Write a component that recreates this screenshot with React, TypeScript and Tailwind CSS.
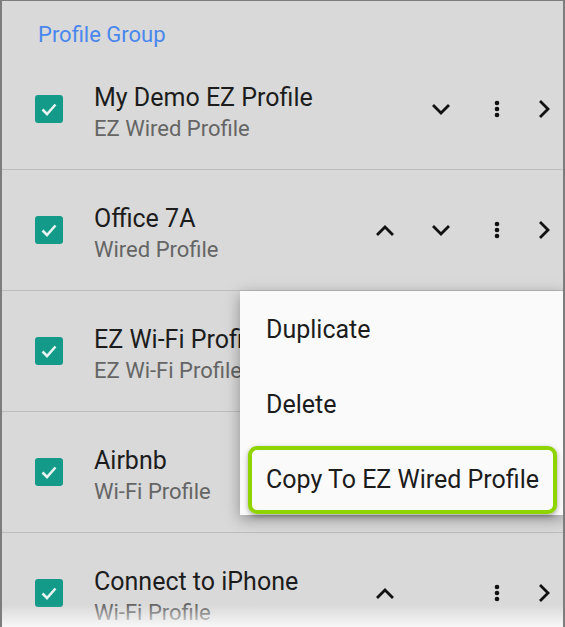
import { ReactNode } from 'react';

type Row = {
    title: string;
    subtitle: string;
    up: boolean;
    down: boolean;
};

const rows: Row[] = [
    { title: 'My Demo EZ Profile', subtitle: 'EZ Wired Profile', up: false, down: true },
    { title: 'Office 7A', subtitle: 'Wired Profile', up: true, down: true },
    { title: 'EZ Wi-Fi Profile', subtitle: 'EZ Wi-Fi Profile', up: true, down: true },
    { title: 'Airbnb', subtitle: 'Wi-Fi Profile', up: true, down: true },
    { title: 'Connect to iPhone', subtitle: 'Wi-Fi Profile', up: true, down: false },
];

function Chevron({ dir }: { dir: 'up' | 'down' | 'right' }) {
    const points = dir === 'up' ? '3,14 10,7 17,14' : dir === 'down' ? '3,7 10,14 17,7' : '7,3 14,10 7,17';
    return (
        <svg width="20" height="20" viewBox="0 0 20 20">
            <polyline points={points} fill="none" stroke="#111" strokeWidth="2.8" strokeLinecap="square" />
        </svg>
    );
}

function Dots() {
    return (
        <svg width="8" height="20" viewBox="0 0 8 20">
            <circle cx="4" cy="4" r="2.3" fill="#111" />
            <circle cx="4" cy="10" r="2.3" fill="#111" />
            <circle cx="4" cy="16" r="2.3" fill="#111" />
        </svg>
    );
}

function Slot({ children, w = 'w-[56px]' }: { children?: ReactNode; w?: string }) {
    return <div className={`${w} flex justify-center items-center`}>{children}</div>;
}

function Checkbox() {
    return (
        <div className="w-[28px] h-[28px] rounded-[3px] bg-[#149a88] flex items-center justify-center shrink-0">
            <svg width="20" height="20" viewBox="0 0 20 20">
                <polyline points="3.5,10.5 8,15 16.5,5.5" fill="none" stroke="#e6f3f1" strokeWidth="2.6" />
            </svg>
        </div>
    );
}

export default function App() {
    return (
        <div className="relative w-[565px] h-[627px] overflow-hidden bg-[#d9d9d9] border-x-2 border-t border-[#7d7d7d] font-['Roboto',sans-serif]">
            <div className="h-[48px] pl-[36px] pt-[22px]">
                <p className="text-[22px] leading-[24px] text-[#4a87ee]">Profile Group</p>
            </div>

            {rows.map((row) => (
                <div key={row.title} className="h-[121px] border-b border-[#bdbdbd] flex items-center pl-[33px]">
                    <Checkbox />
                    <div className="ml-[31px] mt-[6px] flex flex-col whitespace-nowrap">
                        <span className="text-[25px] leading-[30px] text-[#1c1c1c]">{row.title}</span>
                        <span className="text-[22px] leading-[26px] mt-[3px] text-[#656565]">{row.subtitle}</span>
                    </div>
                    <div className="ml-auto flex items-center">
                        <Slot>{row.up && <Chevron dir="up" />}</Slot>
                        <Slot>{row.down && <Chevron dir="down" />}</Slot>
                        <Slot><Dots /></Slot>
                        <Slot w="w-[38px]"><Chevron dir="right" /></Slot>
                    </div>
                </div>
            ))}

            {/* Overflow menu */}
            <div className="absolute left-[238px] top-[290px] w-[324px] h-[224px] bg-[#fafafa] shadow-[0_4px_14px_rgba(0,0,0,0.35)] flex flex-col">
                <div className="h-[75px] flex items-center pl-[26px] pt-[3px] text-[25px] text-[#1c1c1c]">Duplicate</div>
                <div className="h-[75px] flex items-center pl-[26px] pt-[3px] text-[25px] text-[#1c1c1c]">Delete</div>
                <div className="h-[74px] pt-[5px] pl-[8px] pr-[7px] pb-[1px]">
                    <div className="h-full rounded-[9px] border-4 border-[#8fd400] shadow-[0_2px_5px_rgba(0,0,0,0.35)] flex items-center pl-[14px] text-[25px] text-[#1c1c1c] whitespace-nowrap">
                        Copy To EZ Wired Profile
                    </div>
                </div>
            </div>

            {/* bottom fade */}
            <div className="absolute left-0 right-0 bottom-0 h-[22px] bg-gradient-to-b from-transparent to-white/80" />
        </div>
    );
}
